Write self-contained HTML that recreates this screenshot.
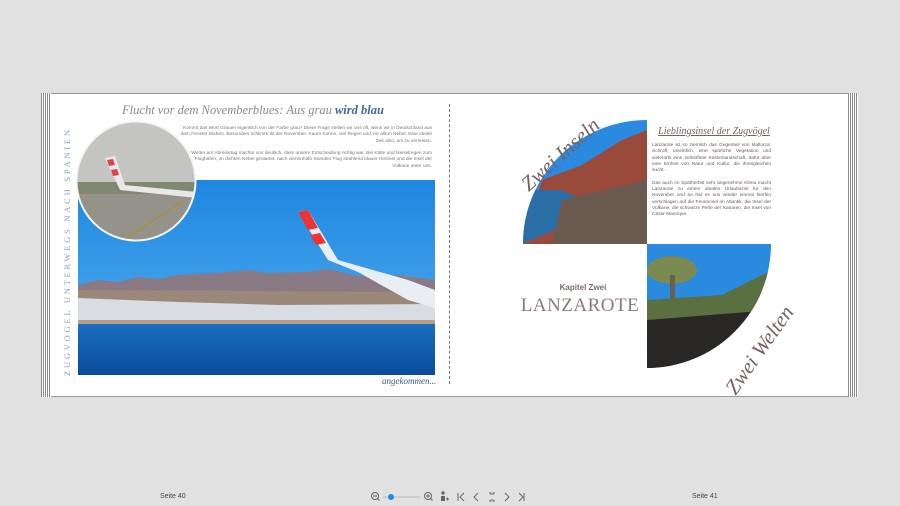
<!DOCTYPE html>
<html><head><meta charset="utf-8"><style>
*{margin:0;padding:0;box-sizing:border-box}
body{width:900px;height:506px;background:#e1e1e1;position:relative;overflow:hidden;font-family:"Liberation Sans",sans-serif}
.abs{position:absolute}
.page{left:41px;top:93px;width:817px;height:304px;background:#fff;border:1px solid #9a9a9a}
.stripes{top:93px;height:304px;width:10px;background:repeating-linear-gradient(90deg,#8a8a8a 0 1px,#fff 1px 2px)}
.script{font-family:"Liberation Serif",serif;font-style:italic}
.txt{font-size:4.8px;line-height:6.3px;color:#777;text-align:justify}
</style></head><body>
<div class="abs page"></div>
<div class="abs stripes" style="left:41px"></div>
<div class="abs stripes" style="left:848px"></div>
<div class="abs" style="left:449px;top:104px;height:280px;border-left:1px dashed #777"></div>

<!-- left page -->
<div class="abs script" style="left:100px;top:103px;width:306px;text-align:center;font-size:12.5px;color:#888;white-space:nowrap">Flucht vor dem Novemberblues: Aus grau <span style="color:#3f6aa0;font-weight:bold">wird blau</span></div>
<div class="abs" style="left:62px;top:376px;transform-origin:0 0;transform:rotate(-90deg);white-space:nowrap;font-family:'Liberation Serif',serif;font-size:8.5px;letter-spacing:2.75px;color:#8aa0bd">ZUGVOGEL UNTERWEGS NACH SPANIEN</div>
<div class="abs txt" style="left:180px;top:126px;width:252px;text-align:right">Kommt das Wort Grauen eigentlich von der Farbe grau? Diese Frage stellen wir uns oft, wenn wir in Deutschland aus dem Fenster blicken. Besonders schlimm ist der November. Kaum Sonne, viel Regen und vor allem Nebel. Eine ideale Zeit also, um zu verreisen.<br><br>Das Wetter am Abreisetag machte uns deutlich, dass unsere Entscheidung richtig war. Bei Kälte und Nieselregen zum Flughafen, im dichten Nebel gestartet, nach viereinhalb Stunden Flug strahlend blauer Himmel und die Insel der Vulkane unter uns.</div>
<svg class="abs" style="left:78px;top:180px" width="357" height="195" viewBox="0 0 357 195">
<defs><linearGradient id="sky" x1="0" y1="0" x2="0" y2="1"><stop offset="0" stop-color="#1f86e0"/><stop offset="1" stop-color="#55b2f0"/></linearGradient>
<linearGradient id="sea" x1="0" y1="0" x2="0" y2="1"><stop offset="0" stop-color="#1a6fc0"/><stop offset="1" stop-color="#0a4a9a"/></linearGradient></defs>
<rect width="357" height="195" fill="url(#sky)"/>
<path d="M0 105 L20 100 L40 102 L60 97 L80 99 L100 95 L140 93 L170 90 L190 93 L230 92 L250 89 L280 96 L320 95 L357 100 L357 140 L0 140Z" fill="#8a7a86"/>
<path d="M0 110 L357 112 L357 140 L0 140Z" fill="#9c8878"/>
<path d="M0 118 L100 122 L200 125 L357 124 L357 140 L0 142Z" fill="#d8dde4"/>
<rect y="140" width="357" height="5" fill="#b79e84"/>
<rect y="144" width="357" height="51" fill="url(#sea)"/>
<path d="M220 32 L230 30 L260 80 L330 100 L357 110 L357 128 L330 120 L280 92 L250 80Z" fill="#e8eef4"/>
<path d="M220 32 L230 30 L240 48 L230 50Z" fill="#e33"/>
<path d="M232 55 L242 53 L248 63 L238 65Z" fill="#e33"/>
</svg>
<svg class="abs" style="left:75px;top:120px" width="122" height="122" viewBox="0 0 122 122">
<defs><clipPath id="c"><circle cx="61" cy="61" r="59"/></clipPath></defs>
<g clip-path="url(#c)"><rect width="122" height="122" fill="#c4c4c2"/><rect y="70" width="122" height="52" fill="#949289"/><rect y="62" width="122" height="12" fill="#80886f"/>
<path d="M30 38 L40 36 L50 65 L122 72 L122 78 L45 70Z" fill="#e8e8e8"/><path d="M32 40 L38 39 L40 45 L34 46Z M36 50 L42 49 L44 55 L38 56Z" fill="#d44"/>
<path d="M45 122 L110 80" stroke="#a89040" stroke-width="1.5"/></g>
<circle cx="61" cy="61" r="59.5" fill="none" stroke="#f4f4f4" stroke-width="2"/>
</svg>
<div class="abs script" style="left:382px;top:376px;font-size:9px;color:#3d5a8a">angekommen...</div>

<!-- right page -->
<svg class="abs" style="left:522px;top:120px" width="250" height="250" viewBox="0 0 250 250">
<defs><clipPath id="q1"><path d="M125 124 L1 124 A124 124 0 0 1 125 0Z"/></clipPath><clipPath id="q2"><path d="M125 124 L249 124 A124 124 0 0 1 125 248Z"/></clipPath></defs>
<g clip-path="url(#q1)"><rect width="125" height="124" fill="#2a8ae0"/><path d="M20 60 L60 45 L100 20 L125 10 L125 124 L0 124Z" fill="#9a4a3a"/><path d="M0 70 L40 70 L80 90 L0 124Z" fill="#2a6ea8"/><path d="M40 80 L125 60 L125 124 L30 124Z" fill="#6a5a50"/></g>
<g clip-path="url(#q2)"><rect x="125" y="124" width="125" height="124" fill="#2a8ae0"/><ellipse cx="150" cy="150" rx="25" ry="14" fill="#7a8a50"/><rect x="148" y="155" width="5" height="40" fill="#6a6050"/><path d="M125 190 L250 170 L250 248 L125 248Z" fill="#2a2826"/><path d="M125 180 L200 175 L250 150 L250 190 L125 200Z" fill="#5a7040"/></g>
</svg>
<div class="abs script" style="left:516px;top:178px;font-size:21px;color:#7a6060;transform:rotate(-42deg);transform-origin:0 0;white-space:nowrap">Zwei Inseln</div>
<div class="abs script" style="left:720px;top:385px;font-size:21px;color:#7a6060;transform:rotate(-55deg);transform-origin:0 0;white-space:nowrap">Zwei Welten</div>
<div class="abs script" style="left:655px;top:126px;width:118px;text-align:center;font-size:10px;color:#7a6060;text-decoration:underline">Lieblingsinsel der Zugvögel</div>
<div class="abs txt" style="left:652px;top:143px;width:119px;color:#6a5a5a">Lanzarote ist so ziemlich das Gegenteil von Mallorca: Schroff, unwirtlich, eine spärliche Vegetation und vielerorts eine zerklüftete Küstenlandschaft, dafür aber eine Einheit von Natur und Kultur, die ihresgleichen sucht.<br><br>Das auch im Spätherbst sehr angenehme Klima macht Lanzarote zu einem idealen Urlaubsziel für den November und so hat es uns wieder einmal hierhin verschlagen auf die Feuerinsel im Atlantik, die Insel der Vulkane, die schwarze Perle der Kanaren, die Insel von César Manrique.</div>
<div class="abs" style="left:530px;top:283px;width:106px;text-align:center;font-size:8px;font-weight:bold;color:#7a6a6a">Kapitel Zwei</div>
<div class="abs" style="left:520px;top:295px;width:120px;text-align:center;font-family:'Liberation Serif',serif;font-size:19px;color:#8a7a7a;letter-spacing:0.5px">LANZAROTE</div>

<!-- bottom bar -->
<div class="abs" style="left:160px;top:493px;font-size:7px;color:#444">Seite 40</div>
<div class="abs" style="left:692px;top:493px;font-size:7px;color:#444">Seite 41</div>
<svg class="abs" style="left:368px;top:490px" width="165" height="14" viewBox="0 0 165 14" fill="none" stroke="#666" stroke-width="1">
<circle cx="7" cy="6" r="3.5"/><path d="M5 6h4M9.5 8.5l2 2"/>
<path d="M15 7h37" stroke="#bbb"/><circle cx="23" cy="7" r="3" fill="#1a8ee8" stroke="none"/>
<circle cx="60" cy="6" r="3.5"/><path d="M58 6h4M60 4v4M62.5 8.5l2 2"/>
<circle cx="75" cy="3" r="1.2" fill="#666"/><rect x="73" y="6" width="4" height="5" fill="#666" stroke="none"/><path d="M78 9h3M79.5 7.5v3"/>
<path d="M90 3v8M96 3l-4 4 4 4"/>
<path d="M110 3l-4 4 4 4"/>
<path d="M121 3h2v2M127 3h-2v2M121 11h2v-2M127 11h-2v-2"/>
<path d="M137 3l4 4-4 4"/>
<path d="M151 3l4 4-4 4M156 3v8"/>
</svg>
</body></html>
